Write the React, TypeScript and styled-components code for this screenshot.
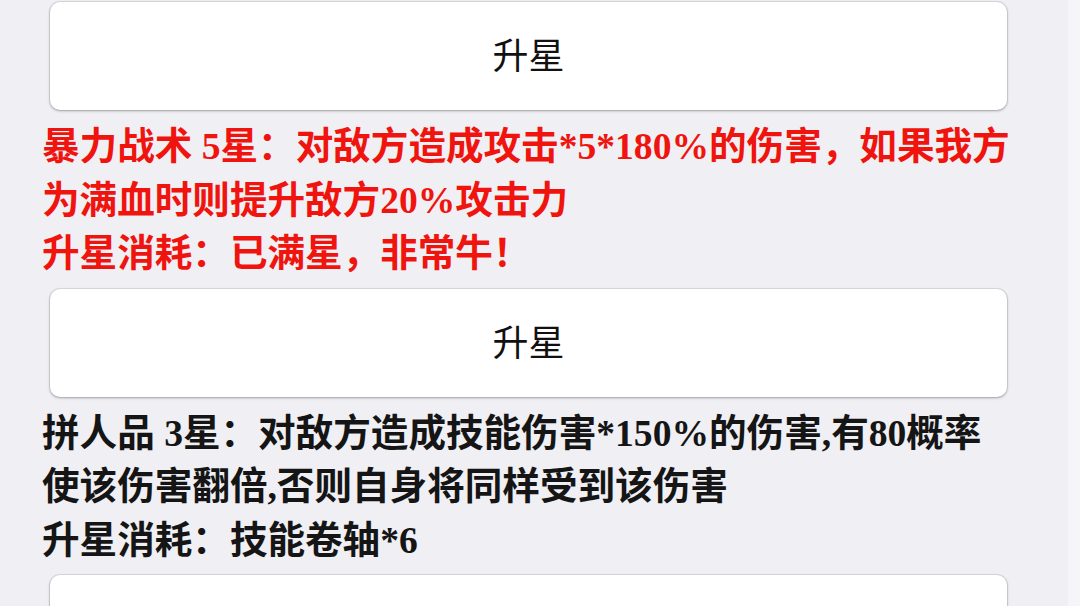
import React from 'react';
import styled, { createGlobalStyle } from 'styled-components';

const GlobalStyle = createGlobalStyle`
  html, body {
    margin: 0;
    padding: 0;
    background: #efeff4;
  }
  body {
    font-family: "Noto Sans CJK SC", "Noto Sans", sans-serif;
  }
`;

const Page = styled.div`
  display: flex;
  width: 1080px;
  height: 606px;
  overflow: hidden;
  background: #efeff4;
`;

const List = styled.div`
  width: 1068px;
  display: flex;
  flex-direction: column;
  padding-top: 2px;
`;

const Gutter = styled.div`
  flex: 1;
  background: #f6f6f8;
`;

const StarButton = styled.button`
  flex-shrink: 0;
  margin-left: 50px;
  width: 957px;
  height: 108px;
  padding: 0 0 6px;
  border: none;
  border-radius: 10px;
  background: #ffffff;
  box-shadow: 0 0 0 1px rgba(0, 0, 0, 0.08), 0 1px 3px rgba(0, 0, 0, 0.28);
  font-family: "Noto Sans CJK SC", sans-serif;
  font-size: 36px;
  font-weight: 400;
  color: #111;
  cursor: pointer;
`;

const Skill = styled.div<{ $maxed?: boolean }>`
  flex-shrink: 0;
  margin: 10px 0 8px 42px;
  font-family: "Liberation Serif", "Noto Sans CJK SC", serif;
  font-size: 37.6px;
  font-weight: 700;
  line-height: 53.5px;
  color: ${(p) => (p.$maxed ? '#f0140f' : '#151515')};
`;

const Line = styled.div`
  white-space: nowrap;
`;

type SkillInfo = {
  lines: string[];
  cost: string;
  maxed?: boolean;
};

const skills: SkillInfo[] = [
  {
    lines: ['暴力战术 5星：对敌方造成攻击*5*180%的伤害，如果我方', '为满血时则提升敌方20%攻击力'],
    cost: '升星消耗：已满星，非常牛！',
    maxed: true,
  },
  {
    lines: ['拼人品 3星：对敌方造成技能伤害*150%的伤害,有80概率', '使该伤害翻倍,否则自身将同样受到该伤害'],
    cost: '升星消耗：技能卷轴*6',
  },
];

export default function App() {
  return (
    <>
      <GlobalStyle />
      <Page>
        <List>
          {skills.map((s, i) => (
            <React.Fragment key={i}>
              <StarButton>升星</StarButton>
              <Skill $maxed={s.maxed}>
                {s.lines.map((l) => (
                  <Line key={l}>{l}</Line>
                ))}
                <Line>{s.cost}</Line>
              </Skill>
            </React.Fragment>
          ))}
          <StarButton aria-label="升星" />
        </List>
        <Gutter />
      </Page>
    </>
  );
}
